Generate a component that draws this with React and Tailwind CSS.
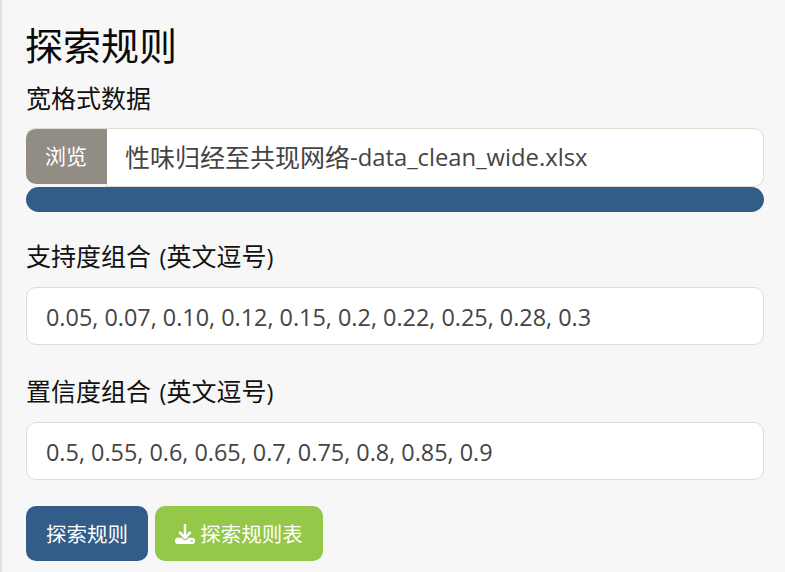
import { FaDownload } from 'react-icons/fa6';

const fontStack = { fontFamily: '"Open Sans", "Noto Sans CJK SC", sans-serif' };

function TextField({ label, value, className }) {
  return (
    <div className={className}>
      <label className="mb-[12px] block text-[25px] leading-[36px] text-[#111] [word-spacing:2px]">
        {label} <span className="text-[23.5px]">(</span>英文逗号<span className="text-[23.5px]">)</span>
      </label>
      <input
        readOnly
        value={value}
        className="block h-[58px] w-full rounded-[10px] border border-[#e2dacd] bg-white px-[19px] pt-[2px] text-[23.4px] text-[#444]"
      />
    </div>
  );
}

export default function App() {
  return (
    <div
      className="h-[572px] w-[785px] overflow-hidden border-l-2 border-[#e6dfd5] bg-[#f7f7f7] pl-[24px] pr-[21px]"
      style={fontStack}
    >
      <h2 className="-ml-[1px] pt-[20px] text-[38px] leading-[50px] text-[#0a0a0a]">探索规则</h2>
      <label className="mt-[10px] block text-[25px] leading-[36px] text-[#111]">宽格式数据</label>

      <div className="mt-[12px] flex h-[59px] items-start">
        <span className="z-10 -mr-[1px] flex h-[56px] w-[81px] items-center justify-center rounded-l-[10px] border-t border-[#e2dacd] bg-[#918c84] pr-[1px] text-[21px] text-white">浏览</span>
        <span className="flex h-[59px] flex-1 items-center rounded-r-[10px] border border-[#e2dacd] bg-white pl-[18px] text-[25px] text-[#444]">
          性味归经至共现网络<span className="text-[23.8px]">-data_clean_wide.xlsx</span>
        </span>
      </div>
      <div className="mb-[26px] h-[25px] rounded-full bg-[#315d88]" />

      <TextField className="mb-[28px]" label="支持度组合" value="0.05, 0.07, 0.10, 0.12, 0.15, 0.2, 0.22, 0.25, 0.28, 0.3" />
      <TextField className="mb-[26px]" label="置信度组合" value="0.5, 0.55, 0.6, 0.65, 0.7, 0.75, 0.8, 0.85, 0.9" />

      <div className="flex gap-[7px]">
        <button className="flex h-[55px] w-[122px] items-center justify-center rounded-[10px] bg-[#315d88] pt-[1px] text-[20.5px] text-white">探索规则</button>
        <button className="flex h-[55px] w-[168px] items-center justify-center gap-[5px] rounded-[10px] bg-[#95c749] pt-[1px] text-[20.5px] text-white">
          <FaDownload className="h-[20px] w-[20px]" />
          探索规则表
        </button>
      </div>
    </div>
  );
}
